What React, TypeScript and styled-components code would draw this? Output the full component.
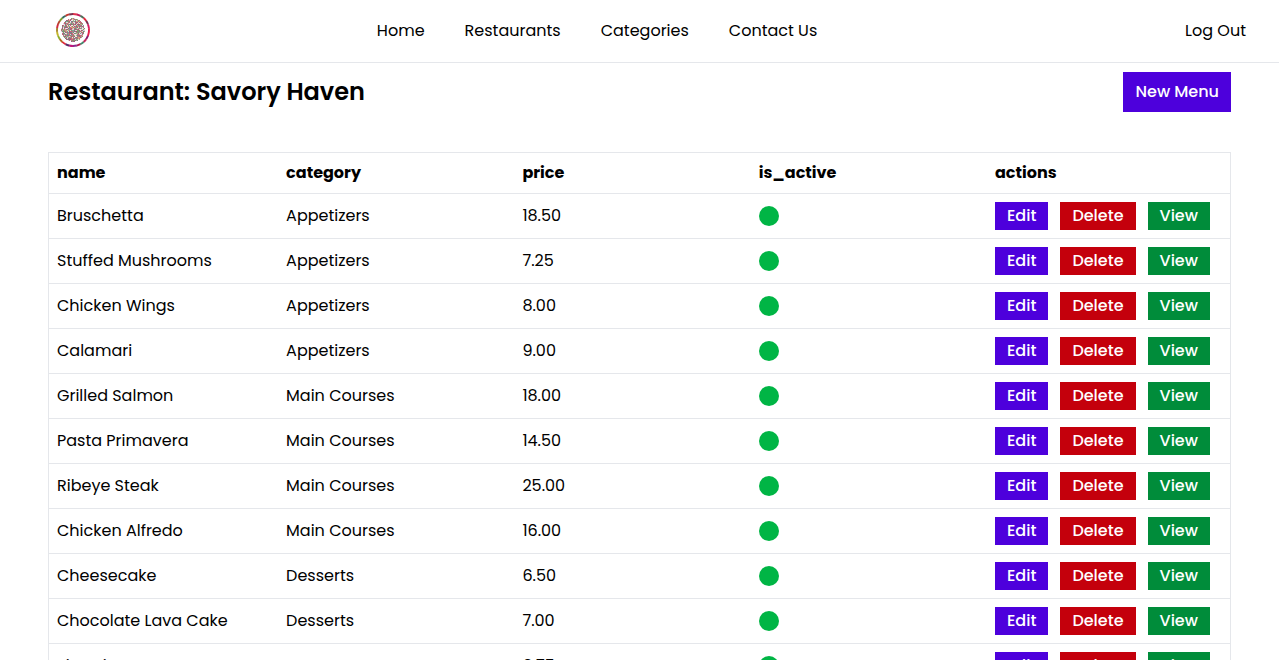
import React from "react";
import styled, { createGlobalStyle } from "styled-components";

const GlobalStyle = createGlobalStyle`
  *, *::before, *::after { box-sizing: border-box; }
  html { overflow: hidden; }
  body {
    margin: 0;
    height: 100vh;
    overflow: hidden;
    background: #fff;
    color: #000;
    font-family: Poppins, Inter, "Open Sans", sans-serif;
    font-size: 16px;
    line-height: 24px;
  }
`;

const Header = styled.header`
  display: flex;
  align-items: center;
  height: 63px;
  padding: 0 33px 1px 53px;
  border-bottom: 1px solid #e5e7eb;
`;

const LogoLink = styled.a`
  display: block;
  width: 40px;
  height: 40px;
  margin-bottom: 2px;
`;

const Nav = styled.nav`
  display: flex;
  gap: 40px;
  margin-left: 283.86px;
`;

const NavLink = styled.a`
  color: #000;
  text-decoration: none;
`;

const LogOut = styled(NavLink)`
  margin-left: auto;
`;

const Main = styled.main`
  padding: 9px 48px 0;
`;

const TitleBar = styled.div`
  display: flex;
  align-items: center;
  justify-content: space-between;
  margin-bottom: 40px;
`;

const Title = styled.h1`
  margin: 0;
  font-size: 24px;
  line-height: 32px;
  font-weight: 600;
`;

const colors = { primary: "#4d00dc", danger: "#c4000c", success: "#008c3a" };

const Button = styled.button<{ $tone: keyof typeof colors; $large?: boolean }>`
  display: block;
  margin: 0;
  border: 0;
  padding: ${(p) => (p.$large ? "8px 12px" : "2px 12px")};
  background: ${(p) => colors[p.$tone]};
  color: #fff;
  font: inherit;
  font-weight: 500;
`;

const Table = styled.table`
  width: 100%;
  table-layout: fixed;
  border-collapse: separate;
  border-spacing: 0;
  border: 1px solid #e5e7eb;
`;

const HeadCell = styled.th`
  padding: 8px;
  border-bottom: 1px solid #e5e7eb;
  text-align: left;
  font-weight: 700;
`;

const Cell = styled.td`
  padding: 8px;
  border-bottom: 1px solid #e5e7eb;
  vertical-align: middle;
`;

const Column = styled.col<{ $width?: number }>`
  width: ${(p) => (p.$width ? `${p.$width}px` : "auto")};
`;

const StatusDot = styled.div`
  width: 20px;
  height: 20px;
  border-radius: 50%;
  background: #00b545;
`;

const Actions = styled.div`
  display: flex;
  gap: 12px;
`;

const ringColors = ["#e0314a", "#c2185b", "#4f6f5a", "#e0283c", "#7a2f4d", "#d81b60", "#e11d48", "#e8204a", "#8a1c6b", "#c2285b", "#3f8a6d", "#b0174f", "#8a2a8a", "#c0187a", "#5b2a66", "#e0283c", "#b5651d", "#8fae2b", "#c5b52b", "#a8862a", "#d12c3f", "#b5452d", "#7fa02b", "#356b62", "#c0382d", "#7a2f4d"];
const speckColors = ["#c9667c", "#7f9a6a", "#e3d9d2", "#a85a72", "#7c7c84", "#d9a47c", "#7f9f96", "#efe9ea", "#b8707c", "#9fb58a", "#8a7a88", "#ddd0d6"];

function Logo() {
  const specks: React.ReactNode[] = [];
  let seed = 17;
  for (let y = 0; y < 24; y += 1) {
    for (let x = 0; x < 24; x += 1) {
      seed = (seed * 48271) % 2147483647;
      if (Math.hypot(x + 0.5 - 12, y + 0.5 - 12) > 11.7) continue;
      specks.push(
        <rect key={`${x}-${y}`} x={8 + x} y={8 + y} width="1" height="1" fill={speckColors[Math.floor(seed / 4096) % speckColors.length]} />
      );
    }
  }
  const arc = (2 * Math.PI * 16) / ringColors.length;
  return (
    <svg width="40" height="40" viewBox="0 0 40 40" aria-label="Logo">
      {ringColors.map((color, i) => (
        <circle
          key={i}
          cx="20"
          cy="20"
          r="16"
          fill="none"
          stroke={color}
          strokeWidth="1.9"
          strokeDasharray={`${arc + 0.2} 200`}
          transform={`rotate(${(i * 360) / ringColors.length - 90} 20 20)`}
        />
      ))}
      {specks}
    </svg>
  );
}

const links = ["Home", "Restaurants", "Categories", "Contact Us"];
const columns = [
  { label: "name", width: 229.1 },
  { label: "category", width: 236.3 },
  { label: "price", width: 236.3 },
  { label: "is_active", width: 236.3 },
  { label: "actions" },
];
const menus = [
  ["Bruschetta", "Appetizers", "18.50"],
  ["Stuffed Mushrooms", "Appetizers", "7.25"],
  ["Chicken Wings", "Appetizers", "8.00"],
  ["Calamari", "Appetizers", "9.00"],
  ["Grilled Salmon", "Main Courses", "18.00"],
  ["Pasta Primavera", "Main Courses", "14.50"],
  ["Ribeye Steak", "Main Courses", "25.00"],
  ["Chicken Alfredo", "Main Courses", "16.00"],
  ["Cheesecake", "Desserts", "6.50"],
  ["Chocolate Lava Cake", "Desserts", "7.00"],
  ["Tiramisu", "Desserts", "6.75"],
];

export default function App() {
  return (
    <>
      <GlobalStyle />
      <Header>
        <LogoLink>
          <Logo />
        </LogoLink>
        <Nav>
          {links.map((link) => (
            <NavLink key={link}>{link}</NavLink>
          ))}
        </Nav>
        <LogOut>Log Out</LogOut>
      </Header>
      <Main>
        <TitleBar>
          <Title>Restaurant: Savory Haven</Title>
          <Button $tone="primary" $large>
            New Menu
          </Button>
        </TitleBar>
        <Table>
          <colgroup>
            {columns.map((c) => (
              <Column key={c.label} $width={c.width} />
            ))}
          </colgroup>
          <thead>
            <tr>
              {columns.map((c) => (
                <HeadCell key={c.label}>{c.label}</HeadCell>
              ))}
            </tr>
          </thead>
          <tbody>
            {menus.map(([name, category, price]) => (
              <tr key={name}>
                <Cell>{name}</Cell>
                <Cell>{category}</Cell>
                <Cell>{price}</Cell>
                <Cell>
                  <StatusDot />
                </Cell>
                <Cell>
                  <Actions>
                    <Button $tone="primary">Edit</Button>
                    <Button $tone="danger">Delete</Button>
                    <Button $tone="success">View</Button>
                  </Actions>
                </Cell>
              </tr>
            ))}
          </tbody>
        </Table>
      </Main>
    </>
  );
}
